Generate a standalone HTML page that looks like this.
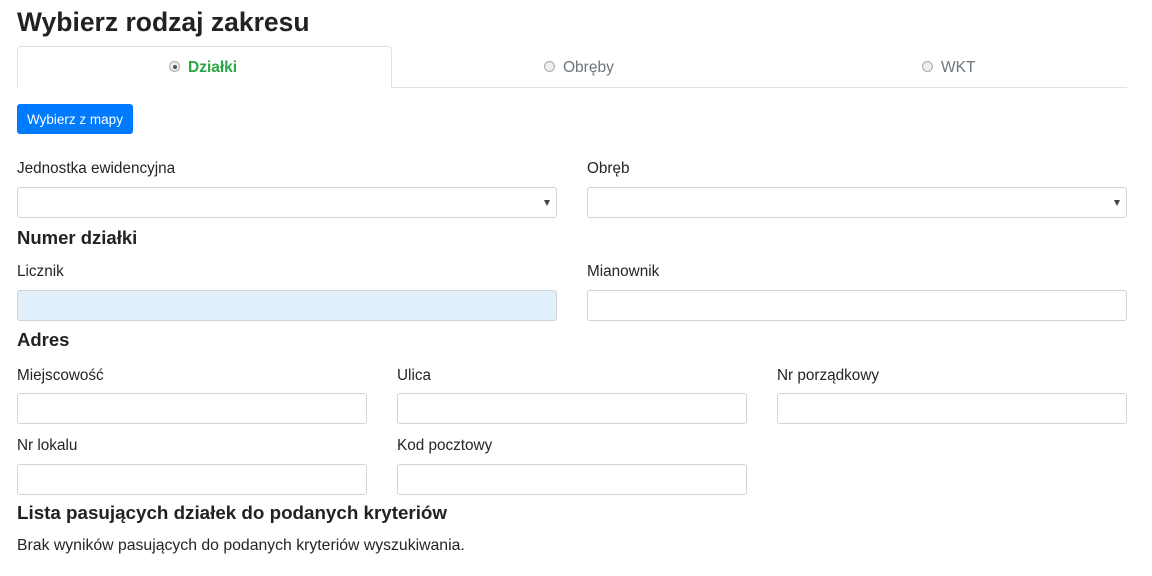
<!DOCTYPE html>
<html><head><meta charset="utf-8"><style>
body{margin:0;width:1152px;height:576px;background:#fff;font-family:"Liberation Sans",sans-serif;color:#212529;position:relative;overflow:hidden}
.a{position:absolute;white-space:nowrap}
.t{font-size:26.5px;font-weight:bold;color:#222}
.h{font-size:18.5px;font-weight:bold;color:#222}
.l{font-size:15.3px;}
.i{position:absolute;border:1px solid #ced4da;border-radius:3px;background:#fff;box-sizing:border-box;height:31px}
.sel::after{content:"";position:absolute;right:6px;top:12px;border-left:3.5px solid transparent;border-right:3.5px solid transparent;border-top:6px solid #444}
.r{display:inline-block;width:11px;height:11px;border:1px solid #aaa;border-radius:50%;background:#eee;vertical-align:0px;margin-right:8px;box-sizing:border-box;position:relative}
.r.on::after{content:"";position:absolute;left:2.5px;top:2.5px;width:4px;height:4px;border-radius:50%;background:#555}
</style></head><body>
<div class="a t" style="left:17px;top:7px">Wybierz rodzaj zakresu</div>
<div class="a" style="left:17px;top:46px;width:375px;height:42px;border:1px solid #dee2e6;border-bottom:none;border-radius:4px 4px 0 0;box-sizing:border-box;background:#fff;z-index:1"></div>
<div class="a" style="left:391px;top:87px;width:736px;height:1px;background:#dee2e6"></div>
<div class="a" style="left:169px;top:59px;font-size:15.5px;font-weight:bold;color:#28a745;z-index:2"><span class="r on"></span>Działki</div>
<div class="a" style="left:544px;top:59px;font-size:15.5px;color:#6c757d"><span class="r"></span>Obręby</div>
<div class="a" style="left:922px;top:59px;font-size:15.5px;color:#6c757d"><span class="r"></span>WKT</div>
<div class="a" style="left:17px;top:104px;width:116px;height:30px;background:#007bff;border-radius:3px;color:#fff;font-size:13.5px;line-height:31px;text-align:center">Wybierz z mapy</div>
<div class="a l" style="left:17px;top:160px">Jednostka ewidencyjna</div>
<div class="a l" style="left:587px;top:160px">Obręb</div>
<div class="i sel" style="left:17px;top:187px;width:540px"></div>
<div class="i sel" style="left:587px;top:187px;width:540px"></div>
<div class="a h" style="left:17px;top:227px">Numer działki</div>
<div class="a l" style="left:17px;top:263px">Licznik</div>
<div class="a l" style="left:587px;top:263px">Mianownik</div>
<div class="i" style="left:17px;top:290px;width:540px;background:#e1f0fb"></div>
<div class="i" style="left:587px;top:290px;width:540px"></div>
<div class="a h" style="left:17px;top:329px">Adres</div>
<div class="a l" style="left:17px;top:367px">Miejscowość</div>
<div class="a l" style="left:397px;top:367px">Ulica</div>
<div class="a l" style="left:777px;top:367px">Nr porządkowy</div>
<div class="i" style="left:17px;top:393px;width:350px"></div>
<div class="i" style="left:397px;top:393px;width:350px"></div>
<div class="i" style="left:777px;top:393px;width:350px"></div>
<div class="a l" style="left:17px;top:437px">Nr lokalu</div>
<div class="a l" style="left:397px;top:437px">Kod pocztowy</div>
<div class="i" style="left:17px;top:464px;width:350px"></div>
<div class="i" style="left:397px;top:464px;width:350px"></div>
<div class="a h" style="left:17px;top:502px;font-size:18.8px">Lista pasujących działek do podanych kryteriów</div>
<div class="a" style="left:17px;top:537px;font-size:15.8px">Brak wyników pasujących do podanych kryteriów wyszukiwania.</div>
</body></html>
